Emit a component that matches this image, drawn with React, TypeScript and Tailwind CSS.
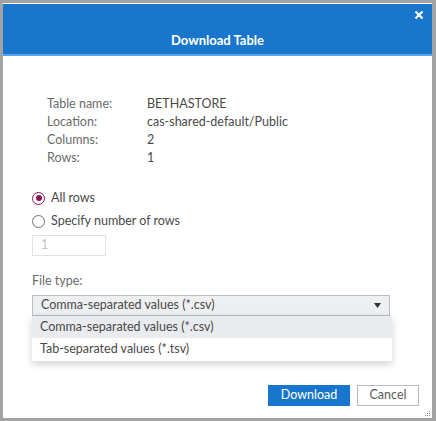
import { useState } from "react";

const INFO = [
  ["Table name:", "BETHASTORE"],
  ["Location:", "cas-shared-default/Public"],
  ["Columns:", "2"],
  ["Rows:", "1"],
];

export default function App() {
  const [allRows, setAllRows] = useState(true);

  return (
    <div className="w-[436px] h-[421px] bg-[#a3a3a3] pt-[3px] pl-[3px] pr-[4px] pb-[3px]" style={{ fontFamily: "Lato, 'Open Sans', sans-serif" }}>
      <div className="relative h-full bg-white border-t border-white flex flex-col">
        {/* Header */}
        <div className="relative h-[52px] bg-[#1877cd] border-b-2 border-[#5aa5e6] flex items-end justify-center pb-[6px]">
          <h1 className="text-[13px] font-bold text-white leading-none mb-[1px]">Download Table</h1>
          <button className="absolute right-[5px] top-[3px] text-white w-4 h-4 flex items-center justify-center">
            <svg width="10" height="10" viewBox="0 0 10 10">
              <path d="M1.5 1.5 L8.5 8.5 M8.5 1.5 L1.5 8.5" stroke="white" strokeWidth="2.2" />
            </svg>
          </button>
        </div>

        <div className="px-[29px] pt-[40px] text-[12.5px] text-[#5a5a5a]">
          <div className="pl-[15px] flex flex-col gap-[2px]">
            {INFO.map(([k, v]) => (
              <div key={k} className="flex h-[16px] items-center">
                <span className="w-[100px] text-[#6a6a6a]">{k}</span>
                <span className="text-[#4a4a4a]">{v}</span>
              </div>
            ))}
          </div>

          <div className="mt-[24px] flex flex-col gap-[7px]">
            <label className="flex items-center gap-[6px] h-[16px] text-[#4a4a4a]" onClick={() => setAllRows(true)}>
              <span className={`w-[13px] h-[13px] rounded-full border-[1.5px] flex items-center justify-center ${allRows ? "border-[#8a1450]" : "border-[#6b7078]"}`}>
                {allRows && <span className="w-[6px] h-[6px] rounded-full bg-[#8a1450]" />}
              </span>
              All rows
            </label>
            <label className="flex items-center gap-[6px] h-[16px] text-[#4a4a4a]" onClick={() => setAllRows(false)}>
              <span className={`w-[13px] h-[13px] rounded-full border-[1.5px] flex items-center justify-center ${!allRows ? "border-[#8a1450]" : "border-[#6b7078]"}`}>
                {!allRows && <span className="w-[6px] h-[6px] rounded-full bg-[#8a1450]" />}
              </span>
              Specify number of rows
            </label>
          </div>

          <div className="mt-[6px] w-[74px] h-[21px] border border-[#e2e2e2] flex items-center pl-[8px] text-[#c4c4c4]">1</div>

          <div className="mt-[17px] text-[#6a6a6a] h-[16px] flex items-center">File type:</div>

          <div className="relative mt-[6px] w-[358px]">
            <div className="h-[21px] bg-[#eeeff1] border border-[#b9bcc2] flex items-center justify-between pl-[8px] pr-[8px] text-[#4a4a4a]">
              <span>Comma-separated values (*.csv)</span>
              <svg width="7" height="5" viewBox="0 0 7 5"><path d="M0 0 H7 L3.5 5 Z" fill="#333" /></svg>
            </div>
            <div className="absolute left-0 top-[21px] w-[360px] bg-white shadow-[0_3px_8px_rgba(0,0,0,0.18)] text-[#4a4a4a]">
              <div className="h-[22px] bg-[#e9ebef] flex items-center pl-[8px]">Comma-separated values (*.csv)</div>
              <div className="h-[23px] flex items-center pl-[8px]">Tab-separated values (*.tsv)</div>
            </div>
          </div>
        </div>

        <div className="mt-auto flex justify-end gap-[7px] pr-[13px] pb-[12px]">
          <button className="w-[82px] h-[21px] bg-[#1877cd] text-white text-[12.5px] flex items-center justify-center">Download</button>
          <button className="w-[62px] h-[21px] bg-white border border-[#b5b8bd] text-[#5a5a5a] text-[12.5px] flex items-center justify-center">Cancel</button>
        </div>

        <svg className="absolute right-[1px] bottom-[1px]" width="7" height="7" viewBox="0 0 7 7">
          <rect x="5" y="1" width="1" height="1" fill="#888" />
          <rect x="3" y="3" width="1" height="1" fill="#888" />
          <rect x="5" y="3" width="1" height="1" fill="#888" />
          <rect x="1" y="5" width="1" height="1" fill="#888" />
          <rect x="3" y="5" width="1" height="1" fill="#888" />
          <rect x="5" y="5" width="1" height="1" fill="#888" />
        </svg>
      </div>
    </div>
  );
}
